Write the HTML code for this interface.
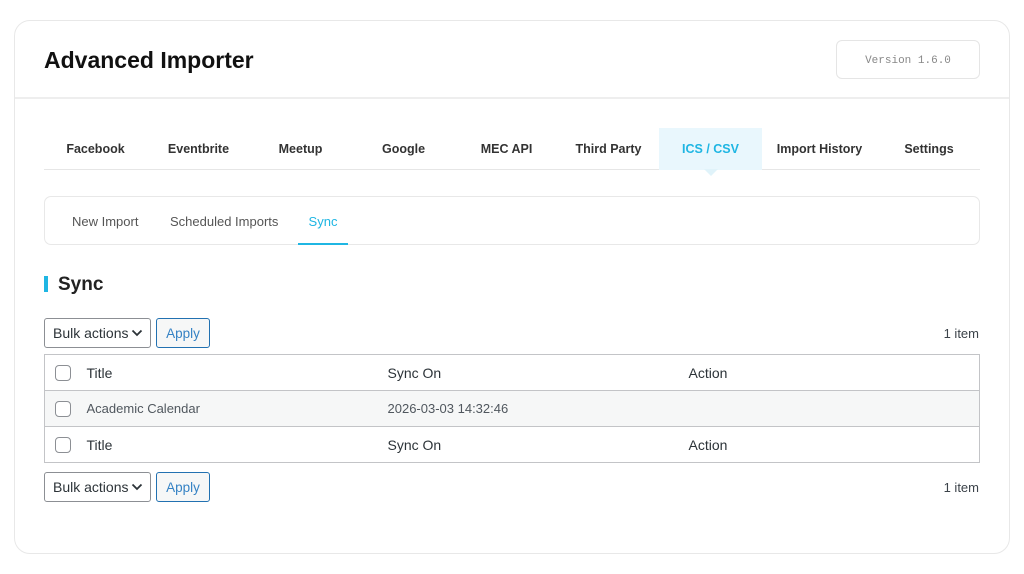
<!DOCTYPE html>
<html><head><meta charset="utf-8"><style>
*{box-sizing:border-box;margin:0;padding:0}
body{width:1024px;height:574px;background:#fff;font-family:"Liberation Sans",sans-serif;color:#1d2327;position:relative;overflow:hidden}
.card{position:absolute;left:14px;top:20px;width:996px;height:534px;border:1px solid #e8e8e8;border-radius:16px;background:#fff}
.hdr{position:absolute;left:0;top:0;width:100%;height:78px;border-bottom:2px solid #eee}
h1{position:absolute;left:29px;top:26px;font-size:23px;font-weight:bold;color:#111}
.ver{position:absolute;left:821px;top:19px;width:144px;height:39px;border:1px solid #e5e5e5;border-radius:6px;font-family:"Liberation Mono",monospace;font-size:11px;color:#888;text-align:center;line-height:40px}
.tabs{position:absolute;left:29px;top:107px;width:936px;height:42px;border-bottom:1px solid #e6e6e6}
.tab{position:absolute;top:0;height:42px;line-height:43px;font-size:12.5px;font-weight:bold;color:#333;text-align:center;width:103px}
.tab.act{background:#e9f7fd;color:#1fb6e3}
.tab.act:after{content:"";position:absolute;left:45px;top:41px;width:0;height:0;border-left:7px solid transparent;border-right:7px solid transparent;border-top:7px solid #e0f3fa}
.sub{position:absolute;left:29px;top:175px;width:936px;height:49px;border:1px solid #e8e8e8;border-radius:7px}
.st{position:absolute;top:0;line-height:50px;font-size:13px;color:#555}
.st.act{color:#1fb6e3;border-bottom:2px solid #1fb6e3;height:48px;width:50px;text-align:center}
.h2{position:absolute;left:29px;top:255px;font-size:19px;font-weight:bold;color:#222;padding-left:10px;border-left:4px solid #1fb6e3;line-height:16px;height:16px}
.h2 span{position:relative;top:1px}
.sel{position:absolute;width:107px;height:30px;border:1px solid #8c8f94;border-radius:3px;font-size:14px;line-height:28px;padding-left:8px;color:#2c3338}
.sel svg{position:absolute;right:7px;top:10px}
.btn{position:absolute;width:54px;height:30px;border:1px solid #2271b1;border-radius:3px;background:#f6f7f7;color:#3582c4;font-size:13.5px;line-height:30px;text-align:center}
.cnt{position:absolute;right:30px;font-size:13px;color:#3c434a}
table{position:absolute;left:29px;top:333px;width:936px;border:1px solid #c3c4c7;border-collapse:collapse}
td{height:36px;font-size:14px;color:#2c3338;position:relative}
tr.d td{background:#f6f7f7;font-size:13px;color:#50575e;border-top:1px solid #c3c4c7;border-bottom:1px solid #c3c4c7}
.cb{display:inline-block;width:16px;height:16px;border:1px solid #8c8f94;border-radius:4px;vertical-align:middle;background:#fff}
</style></head><body>
<div class="card">
<div class="hdr"><h1>Advanced Importer</h1><div class="ver">Version 1.6.0</div></div>
<div class="tabs">
<div class="tab" style="left:0">Facebook</div>
<div class="tab" style="left:103px">Eventbrite</div>
<div class="tab" style="left:205px">Meetup</div>
<div class="tab" style="left:308px">Google</div>
<div class="tab" style="left:411px">MEC API</div>
<div class="tab" style="left:513px">Third Party</div>
<div class="tab act" style="left:615px">ICS / CSV</div>
<div class="tab" style="left:718px;width:115px">Import History</div>
<div class="tab" style="left:833px;width:104px">Settings</div>
</div>
<div class="sub">
<div class="st" style="left:27px">New Import</div>
<div class="st" style="left:125px">Scheduled Imports</div>
<div class="st act" style="left:253px">Sync</div>
</div>
<div class="h2"><span>Sync</span></div>
<div class="sel" style="left:29px;top:297px">Bulk actions<svg width="12" height="8" viewBox="0 0 12 8"><path d="M1.5 1.5l4.5 4.5 4.5-4.5" fill="none" stroke="#2c3338" stroke-width="1.8"/></svg></div>
<div class="btn" style="left:141px;top:297px">Apply</div>
<div class="cnt" style="top:305px">1 item</div>
<table>
<tr><td style="width:42px;padding-left:10px"><span class="cb"></span></td><td style="width:301px">Title</td><td style="width:301px">Sync On</td><td>Action</td></tr>
<tr class="d"><td style="padding-left:10px"><span class="cb"></span></td><td>Academic Calendar</td><td>2026-03-03 14:32:46</td><td></td></tr>
<tr><td style="padding-left:10px"><span class="cb"></span></td><td>Title</td><td>Sync On</td><td>Action</td></tr>
</table>
<div class="sel" style="left:29px;top:451px">Bulk actions<svg width="12" height="8" viewBox="0 0 12 8"><path d="M1.5 1.5l4.5 4.5 4.5-4.5" fill="none" stroke="#2c3338" stroke-width="1.8"/></svg></div>
<div class="btn" style="left:141px;top:451px">Apply</div>
<div class="cnt" style="top:459px">1 item</div>
</div>
</body></html>
